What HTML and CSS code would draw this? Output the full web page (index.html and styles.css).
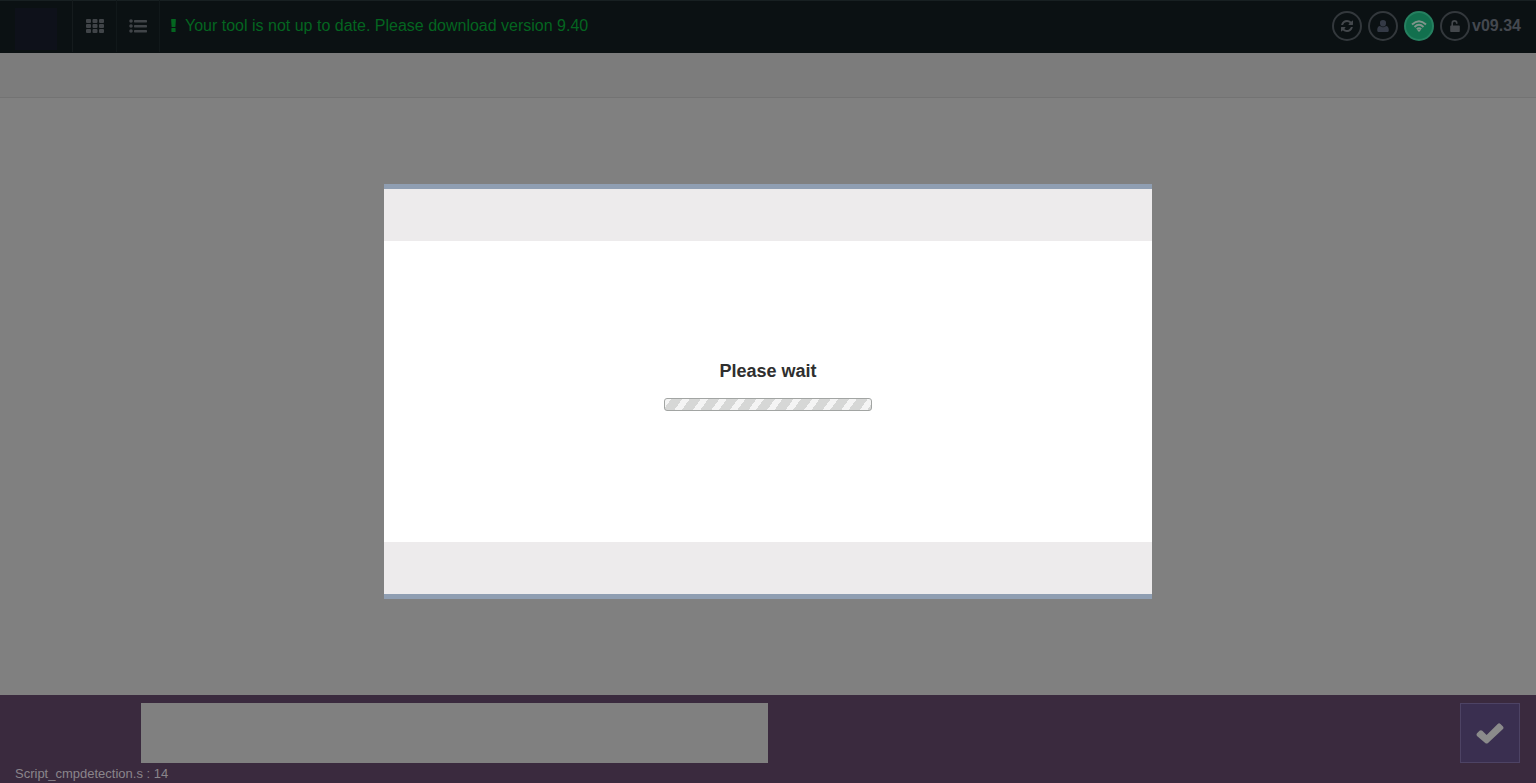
FILE: index.html
```html
<!DOCTYPE html>
<html lang="en">
<head>
<meta charset="utf-8">
<meta name="viewport" content="width=device-width, initial-scale=1">
<title>Please wait</title>
<link rel="stylesheet" href="styles.css">
</head>
<body>
<div class="app">
  <header class="topbar">
    <div class="logo"><span class="logo-mark"></span></div>
    <button class="nav-btn nav-grid" type="button" aria-label="Grid view">
      <svg width="18" height="14" viewBox="0 0 18 14" fill="currentColor"><rect width="5" height="4" rx="1"/><rect x="6.500" width="5" height="4" rx="1"/><rect x="13" width="5" height="4" rx="1"/><rect y="5" width="5" height="4" rx="1"/><rect x="6.500" y="5" width="5" height="4" rx="1"/><rect x="13" y="5" width="5" height="4" rx="1"/><rect y="10" width="5" height="4" rx="1"/><rect x="6.500" y="10" width="5" height="4" rx="1"/><rect x="13" y="10" width="5" height="4" rx="1"/></svg>
    </button>
    <button class="nav-btn nav-list" type="button" aria-label="List view">
      <svg width="18" height="14" viewBox="0 0 18 14" fill="currentColor"><circle cx="2" cy="2" r="1.800"/><circle cx="2" cy="7" r="1.800"/><circle cx="2" cy="12" r="1.800"/><rect x="5" y="1" width="13" height="2.400" rx=".6"/><rect x="5" y="6" width="13" height="2.400" rx=".6"/><rect x="5" y="11" width="13" height="2.400" rx=".6"/></svg>
    </button>
    <p class="notice">
      <svg width="5" height="14" viewBox="0 0 5 14" fill="currentColor"><path d="M.6 0h3.8q.5 0 .5.5L4.400 8H.6L.1.5Q.1 0 .6 0zM.9 9h3.200q.5 0 .5.5v2.900q0 .6-.5.6H.9q-.5 0-.5-.6V9.500q0-.5.5-.5z"/></svg>
      <span>Your tool is not up to date. Please download version 9.40</span>
    </p>
    <div class="status">
      <button class="round" type="button" aria-label="Refresh">
        <svg width="12" height="12" viewBox="0 0 1536 1536" fill="currentColor"><path d="M1511 928q0 5-1 7-64 268-268 434.500T764 1536q-146 0-282.500-55T238 1324l-129 129q-19 19-45 19t-45-19-19-45V960q0-26 19-45t45-19h448q26 0 45 19t19 45-19 45l-137 137q71 66 161 102t187 36q134 0 250-65t186-179q11-17 53-117 8-23 30-23h192q13 0 22.500 9.500t9.500 22.500zM1536 128v448q0 26-19 45t-45 19h-448q-26 0-45-19t-19-45 19-45l138-138Q969 256 768 256q-134 0-250 65T332 500q-11 17-53 117-8 23-30 23H50q-13 0-22.500-9.500T18 608v-7q65-268 270-434.500T768 0q146 0 284 55.500T1297 212l130-129q19-19 45-19t45 19 19 45z"/></svg>
      </button>
      <button class="round user" type="button" aria-label="User">
        <svg width="12" height="12" viewBox="0 0 12 12" fill="currentColor"><path d="M6 0a3 3 0 0 1 3 3.200A3.300 3.300 0 0 1 6 6.600a3.300 3.300 0 0 1-3-3.400A3 3 0 0 1 6 0zM3 6q3 2.400 6 0 2.800.3 2.800 4.200Q11.800 12 10.800 12H1.200Q.2 12 .2 10.200.2 6.300 3 6z"/></svg>
      </button>
      <button class="round online" type="button" aria-label="Wireless connection">
        <svg width="16" height="12" viewBox="0 0 16 12" fill="none" stroke="currentColor" stroke-width="1.900"><path d="M1 4.500Q8-2 15 4.500M3.500 7Q8 2.700 12.500 7M5.800 9.200Q8 7.200 10.200 9.200"/><path d="M8 12L6.300 10.200Q8 8.900 9.700 10.200z" fill="currentColor" stroke="none"/></svg>
      </button>
      <button class="round lock" type="button" aria-label="Unlocked">
        <svg width="10" height="12" viewBox="0 0 10 12" fill="currentColor"><path d="M1 5.500h.4V3.200a3.100 3.100 0 0 1 6.200 0v.6H6v-.6a1.500 1.500 0 0 0-3 0v2.300h6q.8 0 .8.8v4.900q0 .8-.8.8H1q-.8 0-.8-.8V6.300q0-.8.8-.8z"/></svg>
      </button>
      <span class="version">v09.34</span>
    </div>
  </header>
  <div class="subbar"></div>
  <main class="content"></main>
  <footer class="bottom">
    <div class="bottom-row">
      <div class="message"></div>
      <button class="confirm" type="button" aria-label="Confirm">
        <svg width="28" height="22" viewBox="0 0 28 22" fill="currentColor"><path d="M1 11.300l2.500-2.500q1.400-1.200 2.800 0L10.600 13 21.700 1.900q1.400-1.200 2.800 0L27 4.400q1 1.300 0 2.600L12 21q-1.400 1.200-2.800 0L1 13.900q-1-1.300 0-2.600z"/></svg>
      </button>
    </div>
    <div class="script">Script_cmpdetection.s : 14</div>
  </footer>
</div>
<div class="overlay">
  <section class="dialog" role="dialog" aria-modal="true" aria-labelledby="wait-title">
    <div class="dialog-band"></div>
    <div class="dialog-body">
      <h1 class="dialog-title" id="wait-title">Please wait</h1>
      <div class="progress" role="progressbar" aria-labelledby="wait-title"></div>
    </div>
    <div class="dialog-band"></div>
  </section>
</div>
</body>
</html>
```
FILE: styles.css
```css
* {
  box-sizing: border-box;
}

body {
  margin: 0;
  background: #808080;
  font-family: "Liberation Sans", Arial, sans-serif;
}

button {
  margin: 0;
  padding: 0;
  border: 0;
  background: none;
  font: inherit;
}

svg {
  display: block;
}

.app {
  display: flex;
  flex-direction: column;
  min-height: 100vh;
}

.topbar {
  display: flex;
  align-items: stretch;
  height: 53px;
  padding-bottom: 1px;
  background: #0b1113;
  box-shadow: inset 0 1px #182022;
}

.logo {
  width: 73px;
  padding: 8px 15px 0;
  border-right: 1px solid #151b1d;
}

.logo-mark {
  display: block;
  height: 42px;
  background: #0e111a;
}

.nav-btn {
  display: flex;
  align-items: center;
  justify-content: center;
  border-right: 1px solid #11181a;
  color: #404448;
}

.nav-grid {
  width: 44px;
}

.nav-list {
  width: 43px;
}

.notice {
  display: flex;
  align-items: center;
  gap: 9px;
  margin: 0;
  padding-left: 11px;
  color: #046520;
  font-size: 16px;
}

.status {
  display: flex;
  align-items: center;
  gap: 6px;
  margin-left: auto;
  padding-right: 15px;
}

.round {
  display: flex;
  align-items: center;
  justify-content: center;
  width: 30px;
  height: 30px;
  border: 2px solid #33383c;
  border-radius: 50%;
  color: #44484c;
}

.user {
  color: #343a46;
}

.online {
  border-color: #268060;
  background: #12704e;
  color: #80958b;
}

.version {
  margin-left: -4px;
  color: #44484f;
  font-size: 16px;
  font-weight: bold;
}

.subbar {
  height: 45px;
  border-bottom: 1px solid #737373;
  background: #7c7c7c;
}

.content {
  flex: 1;
}

.bottom {
  padding: 8px 16px 0 15px;
  background: #3a2a3e;
}

.bottom-row {
  display: flex;
  align-items: flex-start;
  justify-content: space-between;
}

.message {
  width: calc(50vw - 141px);
  height: 60px;
  margin-left: 126px;
  background: #808080;
}

.confirm {
  display: flex;
  align-items: center;
  justify-content: center;
  width: 60px;
  height: 60px;
  border: 1px solid #4d4364;
  background: #3a2f50;
  color: #8b8b8b;
}

.script {
  padding-top: 2px;
  color: #8a858b;
  font-size: 13px;
  line-height: 18px;
}

.overlay {
  position: fixed;
  inset: 0;
  display: flex;
  align-items: center;
  justify-content: center;
}

.dialog {
  width: 50%;
  border-top: 5px solid #8f9eb2;
  border-bottom: 5px solid #8f9eb2;
  background: #ffffff;
}

.dialog-band {
  height: 52px;
  background: #edebec;
}

.dialog-body {
  display: flex;
  flex-direction: column;
  align-items: center;
  padding: 120px 16px 131px;
}

.dialog-title {
  margin: 0;
  color: #2f2f2f;
  font-size: 18px;
  line-height: 20px;
}

.progress {
  width: 208px;
  height: 13px;
  margin-top: 17px;
  border: 1px solid #a2a5a3;
  border-radius: 3px;
  background: repeating-linear-gradient(126deg, #f4f4f4 0 5px, #d6d7d6 5px 14px, #f4f4f4 14px 15px);
}
```
